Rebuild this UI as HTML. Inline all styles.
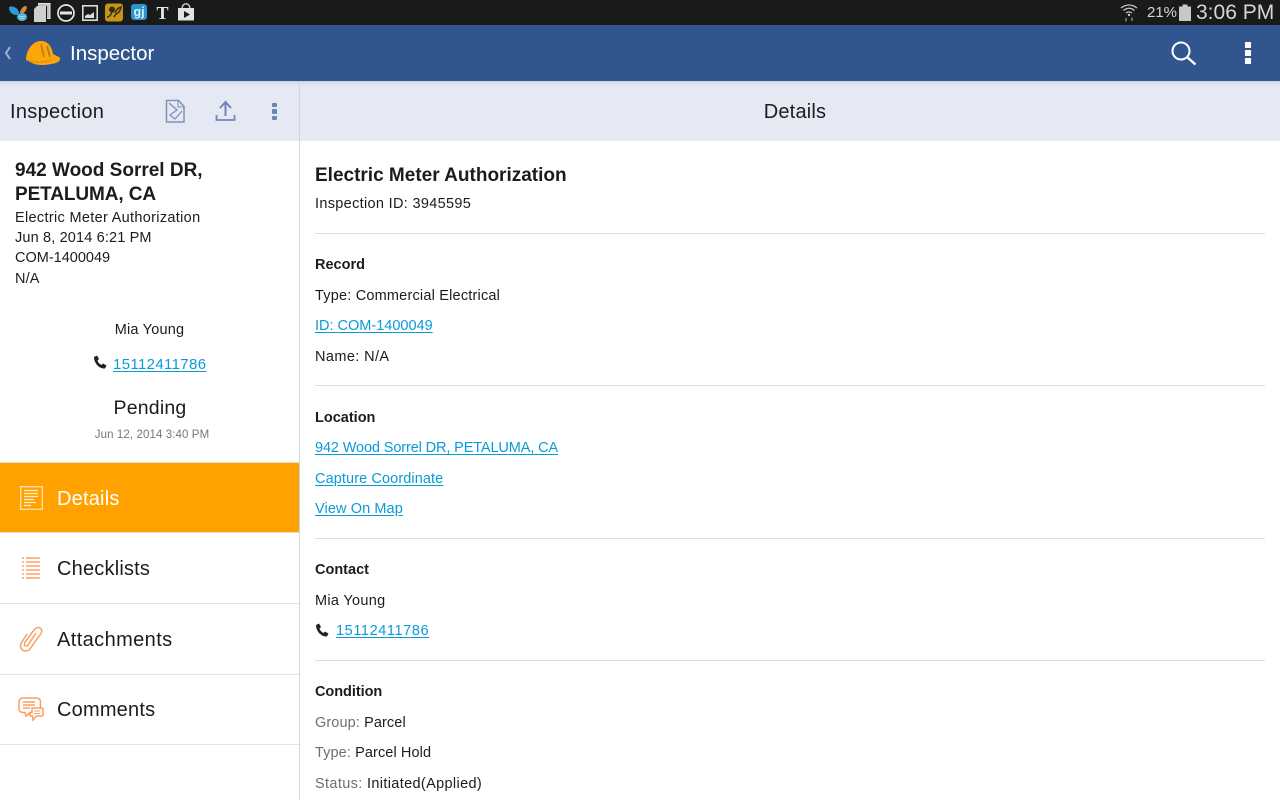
<!DOCTYPE html>
<html><head><meta charset="utf-8"><style>
*{box-sizing:border-box}
html,body{margin:0;padding:0;width:1280px;height:800px;overflow:hidden;background:#fff;font-family:"Liberation Sans",sans-serif;color:#1c1c1c}
.t{position:absolute;white-space:nowrap;line-height:20px;font-size:14.5px;letter-spacing:.1px}
.a{color:#0a9ad6;text-decoration:underline;text-underline-offset:2px}
.b{font-weight:bold}
.g{color:#6f6f6f}
.r{position:absolute;height:1px;background:#dcdcdc}
svg{position:absolute;overflow:visible}
.n{font-size:20px;line-height:26px;left:57px;letter-spacing:.2px}
</style></head><body>
<div style="position:absolute;left:0;top:0;width:1280px;height:25px;background:#1a1a1a"></div>
<div style="position:absolute;left:0;top:25px;width:1280px;height:56px;background:#31568f"></div>
<div style="position:absolute;left:0;top:81px;width:1280px;height:60px;background:linear-gradient(#cdd2dc 0,#e2e6f0 4px,#e5e9f3 8px)"></div>
<div style="position:absolute;left:299px;top:81px;width:1px;height:719px;background:#d5d5d5"></div>

<!-- status icons -->
<svg style="left:0;top:0" width="210" height="25" viewBox="0 0 210 25">
<path d="M9 8c0-2 3-2 5-1 3 1 4 3 5 5 0 2-1 3-3 3-3 0-7-3-7-7z" fill="#2f9ad8"/>
<path d="M20 13c0-3 3-7 6-7 1 0 1 2 0 4-1 2-3 4-6 3z" fill="#d58a3e"/>
<ellipse cx="22" cy="17" rx="5" ry="4" fill="#4fb6d8"/><path d="M19 16.500h6M20 18.500h4" stroke="#bfe6f0" stroke-width=".8"/>
<path d="M38 3h12v16h-3V6H38z" fill="#bdbdbd"/><path d="M38 3.500h12v15h-3" fill="none" stroke="#e8e8e8" stroke-width="1"/>
<path d="M37 6h9v16H34V9z" fill="#cfcfcf"/>
<circle cx="66" cy="13" r="8" fill="none" stroke="#e6e6e6" stroke-width="1.700"/><rect x="60" y="11.500" width="12" height="3" fill="#e6e6e6"/>
<rect x="82.800" y="5.800" width="14.400" height="14.400" fill="#1c1c1c" stroke="#dcdcdc" stroke-width="1.600"/><path d="M85 18v-2l3-2 2 1 4-3v6z" fill="#dcdcdc"/>
<rect x="105" y="3.500" width="18" height="18" rx="3" fill="#c4951a"/>
<circle cx="112" cy="9.500" r="3" fill="#3a2a10"/><path d="M112 12c-1 3-3 5-5 5M115 13c1-3 3-5 6-6-1 4-2 6-5 7l-2 3" fill="none" stroke="#3a2a10" stroke-width="1.500"/>
<rect x="131" y="4" width="16" height="16" rx="3" fill="#2b93cf"/><text x="133.500" y="16" font-size="12.500" font-weight="bold" fill="#d8f0fb" font-family="Liberation Sans">gj</text>
<text x="156.500" y="19" font-size="18" font-weight="bold" fill="#e6e6e6" font-family="Liberation Serif">T</text>
<path d="M178 8h16v12.500h-16z" fill="#e2e2e2"/><path d="M182 9c0-7 8-7 8 0" fill="none" stroke="#e2e2e2" stroke-width="1.200"/><path d="M184 11v7l6-3.500z" fill="#1c1c1c"/>
</svg>
<svg style="left:1100px;top:0" width="180" height="25" viewBox="0 0 180 25">
<path d="M21 8c5-4 11-4 16 0M23.500 10.500c3.500-3 7.500-3 11 0M26 13c2-1.500 4-1.500 6 0" fill="none" stroke="#c8c8c8" stroke-width="1.300"/><circle cx="29" cy="15" r="1.200" fill="#c8c8c8"/>
<path d="M26 18v3.500M32 17.500v3.500" stroke="#8a8a8a" stroke-width="1.400"/>
<path d="M79 6.500h3.500V4.500h5v2H91V21H79z" fill="#c8c8c8"/>
</svg>
<div class="t" style="left:1147px;top:3px;font-size:15px;color:#d6d6d6;letter-spacing:0">21%</div>
<div class="t" style="left:1196px;top:2px;font-size:21px;color:#d6d6d6;line-height:22px;letter-spacing:0">3:06 PM</div>

<!-- action bar -->
<svg style="left:0;top:25px" width="70" height="56" viewBox="0 0 70 56">
<path d="M10 22l-4 6 4 6" fill="none" stroke="#9fb4d2" stroke-width="2"/>
<path d="M26 35c0-9 6-19 15-19 7 0 11 6 12 13l6 3c2 1 1 4-1 5-4 2-12 3-17 3-6 0-9-2-15-5z" fill="#fca60c"/>
<path d="M41 19l3 13M47 21l3 11" stroke="#b97a18" stroke-width="1.600" fill="none"/>
<path d="M27 35c7 3 15 3 25 0" stroke="#e08d06" stroke-width="1" fill="none"/>
</svg>
<div class="t" style="left:70px;top:41px;font-size:20.500px;line-height:26px;color:#fff;letter-spacing:0">Inspector</div>
<svg style="left:1168px;top:38px" width="30" height="30" viewBox="0 0 30 30"><circle cx="13" cy="13" r="8.500" fill="none" stroke="#fff" stroke-width="2"/><path d="M19.500 19.500l8 7" stroke="#fff" stroke-width="2.400"/></svg>
<div style="position:absolute;left:1245px;top:42px;width:6px;height:6px;background:#fff"></div>
<div style="position:absolute;left:1245px;top:50px;width:6px;height:6px;background:#fff"></div>
<div style="position:absolute;left:1245px;top:58px;width:6px;height:6px;background:#fff"></div>

<!-- sub bar -->
<div class="t" style="left:10px;top:99px;font-size:20px;line-height:26px;letter-spacing:.3px">Inspection</div>
<svg style="left:160px;top:95px" width="130" height="34" viewBox="0 0 130 34" fill="none" stroke="#7c93bd">
<path d="M6.500 5.500h12l5.500 6v15.500H6.500z" stroke-width="1.500"/><path d="M18 6v6h6" stroke-width="1"/><path d="M9 8l8 7-7 5 5 4 7-8" stroke-width="1.300"/>
<path d="M65.500 21V8M60 13l5.500-6 5.500 6" stroke="#6d87b5" stroke-width="2"/><path d="M56.500 20v5h18v-5" stroke="#6d87b5" stroke-width="1.800"/>
</svg>
<div style="position:absolute;left:272px;top:103px;width:5px;height:4px;background:#6c86b4;border-radius:1px"></div>
<div style="position:absolute;left:272px;top:109px;width:5px;height:5px;background:#6c86b4;border-radius:1px"></div>
<div style="position:absolute;left:272px;top:116px;width:5px;height:4px;background:#6c86b4;border-radius:1px"></div>
<div class="t" style="left:300px;width:990px;text-align:center;top:99px;font-size:20px;line-height:26px;letter-spacing:.2px">Details</div>

<!-- left panel -->
<div class="t b" style="left:15px;top:159px;font-size:19px;line-height:24px;letter-spacing:0">942 Wood Sorrel DR,</div>
<div class="t b" style="left:15px;top:183px;font-size:19px;line-height:24px;letter-spacing:-.1px">PETALUMA, CA</div>
<div class="t" style="left:15px;top:208px;letter-spacing:.32px">Electric Meter Authorization</div>
<div class="t" style="left:15px;top:228px;letter-spacing:.15px">Jun 8, 2014 6:21 PM</div>
<div class="t" style="left:15px;top:248px;letter-spacing:0">COM-1400049</div>
<div class="t" style="left:15px;top:269px">N/A</div>
<div class="t" style="left:0;width:299px;text-align:center;top:320px;letter-spacing:.2px">Mia Young</div>
<svg style="left:93px;top:355px" width="15" height="15" viewBox="0 0 15 15"><path d="M1 2l3-1.500 2 3.500-1.500 1.500c.5 2 2 3.500 4 4.500l1.500-1.500 3.500 2-1.500 3C6 14 1 8 1 2z" fill="#222"/></svg>
<div class="t a" style="left:113px;top:355px;font-size:15px;letter-spacing:.35px">15112411786</div>
<div class="t" style="left:0;width:300px;text-align:center;top:396px;font-size:19.500px;line-height:24px;letter-spacing:.2px">Pending</div>
<div class="t g" style="left:0;width:304px;text-align:center;top:425px;font-size:11.500px;color:#777">Jun 12, 2014 3:40 PM</div>

<!-- nav -->
<div style="position:absolute;left:0;top:462px;width:299px;height:1px;background:#e2e2e2"></div>
<div style="position:absolute;left:0;top:463px;width:299px;height:69px;background:#ffa200"></div>
<div style="position:absolute;left:0;top:532px;width:299px;height:1px;background:#f0d9b5"></div>
<div style="position:absolute;left:0;top:603px;width:299px;height:1px;background:#e4e4e4"></div>
<div style="position:absolute;left:0;top:674px;width:299px;height:1px;background:#e4e4e4"></div>
<div style="position:absolute;left:0;top:744px;width:299px;height:1px;background:#e4e4e4"></div>
<div class="t n" style="top:486px;color:#fff">Details</div>
<div class="t n" style="top:556px">Checklists</div>
<div class="t n" style="top:627px;letter-spacing:.4px">Attachments</div>
<div class="t n" style="top:697px">Comments</div>
<svg style="left:15px;top:480px" width="30" height="36" viewBox="0 0 30 36" fill="none">
<rect x="5.700" y="6.700" width="21.600" height="22.600" stroke="#ffdfa8" stroke-width="1.400"/>
<path d="M9 10.500h14M9 13.500h14M9 16.500h14M9 19.500h10M9 22.500h12M9 25.500h7" stroke="#ffedcc" stroke-width="1.300"/>
</svg>
<svg style="left:15px;top:550px" width="30" height="36" viewBox="0 0 30 36" fill="none" stroke="#ffb98d" stroke-width="2">
<path d="M11 8h14M11 12h14M11 16h14M11 20h14M11 24h14M11 28h14"/><path d="M7 8h2M7 12h2M7 16h2M7 20h2M7 24h2M7 28h2"/>
</svg>
<svg style="left:15px;top:620px" width="30" height="36" viewBox="0 0 30 36" fill="none" stroke="#fb9f62" stroke-width="1.500">
<path d="M21 13L13 25c-1 1.500-3 1-3.500 0-.5-1 0-2 .5-3L19 10c2-2.500 4.500-3 6-2 2 1 2 3.500 1 5.500L16 27.500c-2 3.500-5 4-7.500 3C6 29.500 4.500 26 6.500 22.500L12 14"/>
</svg>
<svg style="left:15px;top:690px" width="32" height="36" viewBox="0 0 32 36" fill="none" stroke="#fb9f62" stroke-width="1.500">
<path d="M8 8h13c3 0 4.500 1.500 4.500 4v6H17v4.500h-2L11 26l-1-3.500H8c-2.500 0-4-1.500-4-4V12c0-2.500 1.500-4 4-4z"/><path d="M8 12h12M8 15h12M8 18h7" stroke-width="1.500"/>
<path d="M25 18h1.500c1 0 1.500.5 1.500 1.500v5c0 1-.5 1.500-1.500 1.500h-5L18 30l-.5-4H15v-3"/><path d="M19 21h6M19 23.500h6" stroke-width="1"/>
</svg>

<!-- right panel -->
<div class="t b" style="left:315px;top:164px;font-size:19px;line-height:24px;letter-spacing:0">Electric Meter Authorization</div>
<div class="t" style="left:315px;top:194px;letter-spacing:.32px">Inspection ID: 3945595</div>
<div class="r" style="left:315px;top:233px;width:950px"></div>
<div class="t b" style="left:315px;top:255px;letter-spacing:0">Record</div>
<div class="t" style="left:315px;top:286px;letter-spacing:.2px">Type: Commercial Electrical</div>
<div class="t a" style="left:315px;top:316px;letter-spacing:0">ID: COM-1400049</div>
<div class="t" style="left:315px;top:347px;letter-spacing:.4px">Name: N/A</div>
<div class="r" style="left:315px;top:385px;width:950px"></div>
<div class="t b" style="left:315px;top:408px;letter-spacing:0">Location</div>
<div class="t a" style="left:315px;top:438px;letter-spacing:-.12px">942 Wood Sorrel DR, PETALUMA, CA</div>
<div class="t a" style="left:315px;top:469px">Capture Coordinate</div>
<div class="t a" style="left:315px;top:499px">View On Map</div>
<div class="r" style="left:315px;top:538px;width:950px"></div>
<div class="t b" style="left:315px;top:560px;letter-spacing:0">Contact</div>
<div class="t" style="left:315px;top:591px;letter-spacing:.3px">Mia Young</div>
<svg style="left:315px;top:623px" width="15" height="15" viewBox="0 0 15 15"><path d="M1 2l3-1.500 2 3.500-1.500 1.500c.5 2 2 3.500 4 4.500l1.500-1.500 3.500 2-1.500 3C6 14 1 8 1 2z" fill="#222"/></svg>
<div class="t a" style="left:336px;top:621px;letter-spacing:.6px">15112411786</div>
<div class="r" style="left:315px;top:660px;width:950px"></div>
<div class="t b" style="left:315px;top:682px;letter-spacing:-.05px">Condition</div>
<div class="t" style="left:315px;top:713px"><span class="g">Group:</span> Parcel</div>
<div class="t" style="left:315px;top:743px"><span class="g">Type:</span> Parcel Hold</div>
<div class="t" style="left:315px;top:774px;letter-spacing:.35px"><span class="g">Status:</span> Initiated(Applied)</div>
</body></html>
